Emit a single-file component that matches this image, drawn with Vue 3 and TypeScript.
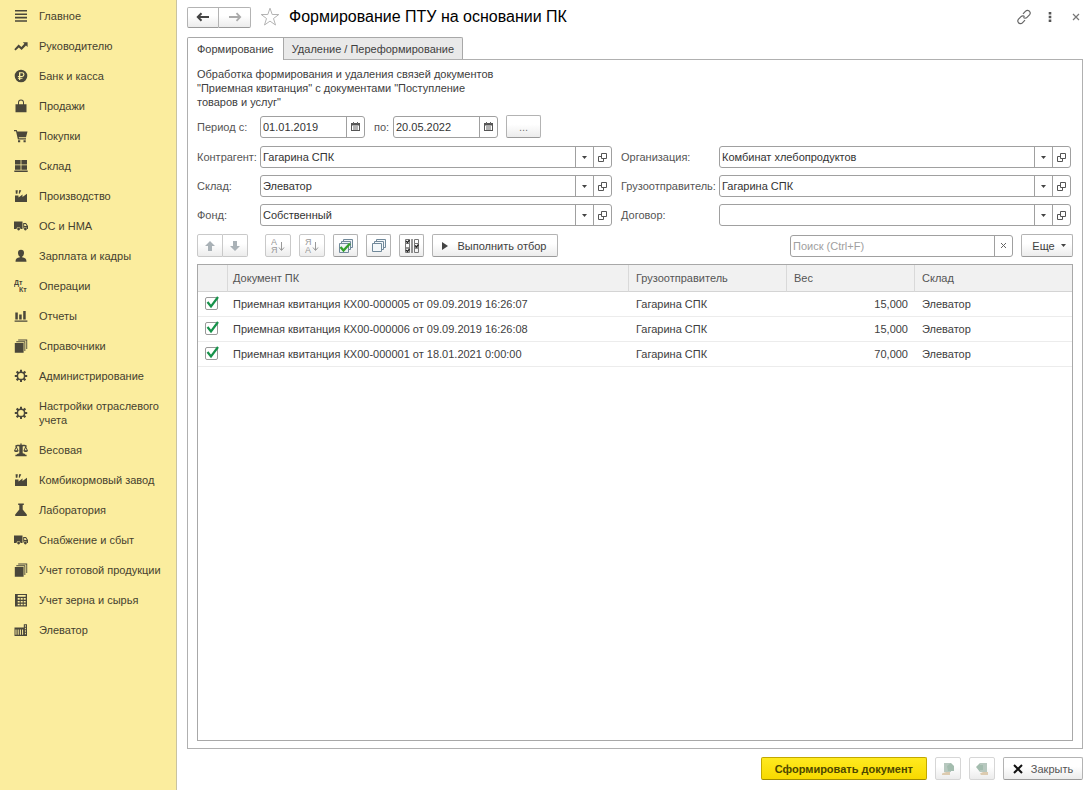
<script setup lang="ts">
import { ref } from 'vue'

interface Section { title: string; icon: string }
interface Receipt { name: string; sender: string; weight: string; store: string; on: boolean }
interface Field { id: string; label: string; value: string }

const paths: Record<string, string> = {
  menu: 'M1 1h12v1.6H1zM1 4.4h12V6H1zM1 7.8h12v1.6H1zM1 11.2h12v1.6H1z',
  trend: 'M0.3 10.2 4.6 5.6 7.4 8 10.4 4.8 8.8 3.2H13.6V8L12 6.4 7.6 10.9 4.8 8.4 1.6 11.4z',
  ruble: 'M7 .7a6.3 6.3 0 1 0 0 12.6A6.3 6.3 0 0 0 7 .7zM5 3.2h3.1a2.4 2.4 0 0 1 0 4.8H6.3v.7h2.2v1H6.3v1.2H5V9.700H3.900v-1H5V8H3.900V6.900H5zM6.300 4.300v2.600h1.700a1.300 1.300 0 0 0 0-2.600z',
  bag: 'M1.500 5.200h2.500V3.400a3 3 0 0 1 6 0v1.800h2.500V13.200h-11zM5 5.200h4V3.400a2 2 0 0 0-4 0z',
  cart: 'M0 1h2.700l.6 1.600H13.500L12 8.300H4.800l.2 1h7v1.100H3.900L2 2.300H0zM4 11.200h2.200v2H4zM9.500 11.200h2.200v2H9.500z',
  store: 'M1 1h5.600v4.500H1zM7.400 1H13v4.500H7.400zM1 6.300h5.600v4.500H1zM7.400 6.300H13v4.500H7.400zM.3 11.500h13.400v1.600H.3z',
  factory: 'M1 13V6.500h3.500V8.500L8.500 5.500v2.500L13 4.800V13zM1.600 1.200h2.200L3.400 4.800H1.800zM5 1.200h2.300L5.600 4.800H4.800z',
  truck: 'M0 2.500h8.500V10H6.500a2 2 0 0 0-4 0H0zM9.200 4H12l2 3v3h-.8a1.900 1.900 0 0 0-3.800 0h-.2zM10.200 5v2h2.500l-1.200-2zM3.200 10a1.400 1.400 0 1 0 2.800 0 1.400 1.400 0 0 0-2.800 0zM10 10a1.400 1.400 0 1 0 2.800 0A1.400 1.400 0 0 0 10 10z',
  person: 'M7 .800a3 3 0 0 1 3 3c0 1.700-.8 3.400-1.900 3.900v.5C11 8.700 12.500 9.700 12.500 12.700h-11c0-3 1.500-4 4.400-4.500v-.5C4.800 7.200 4 5.500 4 3.800a3 3 0 0 1 3-3z',
  chart: 'M1.300 3.500h2.500v7H1.300zM5.200 5.500h2.500v5H5.200zM9.200 2h2.500v8.500H9.200zM.6 11.400h12.800v1.400H.6z',
  books: 'M.8 4h8.800v9.700H.8zM2.300 2.300h9v9.600h-.900V3.200H2.300zM4.200.600h9v9.500h-.9V1.500H4.200z',
  gear: 'M6 .700h2v1.900l1.200.5 1.400-1.300 1.500 1.500-1.300 1.400.5 1.200h1.900v2h-1.900l-.5 1.200 1.300 1.400-1.500 1.500-1.400-1.300-1.200.5v1.900H6v-1.900l-1.200-.5-1.400 1.300-1.500-1.500 1.300-1.400-.5-1.200H.8v-2h1.900l.5-1.200-1.300-1.400 1.500-1.500 1.400 1.300L6 2.600zM7 4.100a2.850 2.850 0 1 0 0 5.700 2.850 2.850 0 0 0 0-5.700z',
  scale: 'M6.300.5h1.400V2c2.500-.8 4 .2 5.300.7v.8h-1l2 4.200c-.4 1.700-4.200 1.700-4.600 0l1.900-4.200c-1-.2-2-.4-2.600-.1v6.800c1.800.2 2.500.8 2.700 1.600h1.200v1.400H1.400v-1.400h1.200c.2-.8 1.900-1.400 2.700-1.600V3.400c-.6-.3-1.600-.1-2.600.1l1.900 4.200c-.4 1.700-4.200 1.700-4.600 0l2-4.200H1v-.8C2.300 2.200 3.800 1.200 6.300 2zM2.300 4.900 1.200 7.300h2.200zM11.700 4.900l-1.100 2.400h2.200z',
  flask: 'M4.200.5h5.600v1.400H8.700v4.600l4.100 5v1.600H1.200v-1.600l4.100-5V1.900H4.200z',
  calc: 'M1 1h12v12.500H1zM3.700 2v1.700h8V2zM3.700 5v1.700h2V5zM6.700 5v1.700h2V5zM9.700 5v1.700h2V5zM3.700 7.900v1.600h2V7.900zM6.700 7.900v1.600h2V7.900zM9.700 7.900v1.600h2V7.900zM3.700 10.700v1.600h2v-1.600zM6.700 10.700v1.600h2v-1.600zM9.700 10.700v1.600h2v-1.600z',
  silo: 'M.5 4.500h9.300V1.200H13V13H.5zM1.500 6.400v5.400h1V6.400zM3.700 6.400v5.400h1V6.400zM5.900 6.400v5.400h1V6.400zM8.100 6.400v5.400h1V6.400zM10.900 2.200v1.500h1V2.200zM10.900 4.700v1.500h1V4.700zM10.900 7.200v1.500h1V7.200zM10.900 9.700v1.500h1V9.700z',
}

const sections: Section[] = [
  { title: 'Главное', icon: 'menu' },
  { title: 'Руководителю', icon: 'trend' },
  { title: 'Банк и касса', icon: 'ruble' },
  { title: 'Продажи', icon: 'bag' },
  { title: 'Покупки', icon: 'cart' },
  { title: 'Склад', icon: 'store' },
  { title: 'Производство', icon: 'factory' },
  { title: 'ОС и НМА', icon: 'truck' },
  { title: 'Зарплата и кадры', icon: 'person' },
  { title: 'Операции', icon: 'entries' },
  { title: 'Отчеты', icon: 'chart' },
  { title: 'Справочники', icon: 'books' },
  { title: 'Администрирование', icon: 'gear' },
  { title: 'Настройки отраслевого учета', icon: 'gear' },
  { title: 'Весовая', icon: 'scale' },
  { title: 'Комбикормовый завод', icon: 'factory' },
  { title: 'Лаборатория', icon: 'flask' },
  { title: 'Снабжение и сбыт', icon: 'truck' },
  { title: 'Учет готовой продукции', icon: 'books' },
  { title: 'Учет зерна и сырья', icon: 'calc' },
  { title: 'Элеватор', icon: 'silo' },
]

const fields = ref<Field[]>([
  { id: 'contractor', label: 'Контрагент:', value: 'Гагарина СПК' },
  { id: 'organization', label: 'Организация:', value: 'Комбинат хлебопродуктов' },
  { id: 'store', label: 'Склад:', value: 'Элеватор' },
  { id: 'sender', label: 'Грузоотправитель:', value: 'Гагарина СПК' },
  { id: 'fund', label: 'Фонд:', value: 'Собственный' },
  { id: 'contract', label: 'Договор:', value: '' },
])

const receipts = ref<Receipt[]>([
  { name: 'Приемная квитанция КХ00-000005 от 09.09.2019 16:26:07', sender: 'Гагарина СПК', weight: '15,000', store: 'Элеватор', on: true },
  { name: 'Приемная квитанция КХ00-000006 от 09.09.2019 16:26:08', sender: 'Гагарина СПК', weight: '15,000', store: 'Элеватор', on: true },
  { name: 'Приемная квитанция КХ00-000001 от 18.01.2021 0:00:00', sender: 'Гагарина СПК', weight: '70,000', store: 'Элеватор', on: true },
])

const dateFrom = ref('01.01.2019')
const dateTo = ref('20.05.2022')
const search = ref('')

function setAll(on: boolean) {
  receipts.value.forEach((r) => { r.on = on })
}
function invert() {
  receipts.value.forEach((r) => { r.on = !r.on })
}
</script>

<template>
  <div class="app">
    <nav class="side">
      <a v-for="s in sections" :key="s.title" href="#" class="section">
        <svg class="section-icon" viewBox="0 0 14 14" aria-hidden="true">
          <g v-if="s.icon === 'entries'" class="entries">
            <text x="0" y="5.500">Дт</text>
            <text x="5" y="13">Кт</text>
          </g>
          <path v-else :d="paths[s.icon]" fill-rule="evenodd" />
        </svg>
        <span>{{ s.title }}</span>
      </a>
    </nav>

    <main class="main">
      <header class="head">
        <div class="pair nav-pair">
          <button type="button" class="btn" aria-label="Назад">
            <svg width="14" height="10" viewBox="0 0 14 10"><path d="M1.500 5H13M5.500 1.200 1.800 5l3.700 3.800" fill="none" stroke="#444" stroke-width="2" /></svg>
          </button>
          <button type="button" class="btn" aria-label="Вперед">
            <svg width="14" height="10" viewBox="0 0 14 10"><path d="M1 5h11.500M8.500 1.200 12.200 5 8.500 8.800" fill="none" stroke="#aaa" stroke-width="1.800" /></svg>
          </button>
        </div>
        <button type="button" class="plain" aria-label="В избранное">
          <svg width="20" height="20" viewBox="0 0 20 20"><path d="M10 1.200l2.200 6.300h6.600l-5.300 4 2 6.500-5.500-3.900L4.500 18l2-6.500-5.300-4h6.600z" fill="#fff" stroke="#b4b4b4" /></svg>
        </button>
        <h1>Формирование ПТУ на основании ПК</h1>
        <div class="head-tools">
          <button type="button" class="plain" aria-label="Ссылка">
            <svg width="16" height="16" viewBox="0 0 16 16" fill="none" stroke="#666" stroke-width="1.200"><path d="M7 4.800 9.600 2.200a2.500 2.500 0 0 1 4 .2 2.600 2.600 0 0 1 .1 3.300L11 8.400a2.500 2.500 0 0 1-3.600 0M9 11.200l-2.600 2.600a2.500 2.500 0 0 1-4-.2 2.600 2.600 0 0 1-.1-3.300L5 7.600a2.500 2.500 0 0 1 3.600 0" /></svg>
          </button>
          <button type="button" class="plain" aria-label="Меню">
            <svg width="4" height="12" viewBox="0 0 4 12" fill="#555"><path d="M.7 1h2.600v2.400H.7zM.7 4.800h2.600v2.400H.7zM.7 8.600h2.600V11H.7z" /></svg>
          </button>
          <button type="button" class="plain" aria-label="Закрыть окно">
            <svg width="8" height="8" viewBox="0 0 8 8"><path d="M1 1l6 6M7 1 1 7" fill="none" stroke="#777" stroke-width="1.200" /></svg>
          </button>
        </div>
      </header>

      <div class="tabs" role="tablist">
        <button type="button" role="tab" aria-selected="true" class="tab active">Формирование</button>
        <button type="button" role="tab" aria-selected="false" class="tab">Удаление / Переформирование</button>
      </div>

      <section class="panel">
        <p class="about">Обработка формирования и удаления связей документов "Приемная квитанция" с документами "Поступление товаров и услуг"</p>

        <div class="period">
          <label for="from" class="period-label">Период с:</label>
          <div class="field date">
            <input id="from" v-model="dateFrom" type="text">
            <button type="button" aria-label="Календарь">
              <svg width="9" height="9" viewBox="0 0 9 9"><path d="M0 1h9v8H0zM1 3.600v4.400h7V3.600z" fill="#555" fill-rule="evenodd" /><path d="M2.500 0v2M6.500 0v2M2 5h5M2 7h5" stroke="#666" /></svg>
            </button>
          </div>
          <label for="to" class="to-label">по:</label>
          <div class="field date">
            <input id="to" v-model="dateTo" type="text">
            <button type="button" aria-label="Календарь">
              <svg width="9" height="9" viewBox="0 0 9 9"><path d="M0 1h9v8H0zM1 3.600v4.400h7V3.600z" fill="#555" fill-rule="evenodd" /><path d="M2.500 0v2M6.500 0v2M2 5h5M2 7h5" stroke="#666" /></svg>
            </button>
          </div>
          <button type="button" class="btn dots">...</button>
        </div>

        <div class="filters">
          <div v-for="f in fields" :key="f.id" class="filter">
            <label :for="f.id">{{ f.label }}</label>
            <div class="field">
              <input :id="f.id" v-model="f.value" type="text">
              <button type="button" aria-label="Выбрать">
                <svg width="5" height="3" viewBox="0 0 5 3"><path d="M0 0h5L2.500 3z" fill="#444" /></svg>
              </button>
              <button type="button" aria-label="Открыть">
                <svg width="9" height="9" viewBox="0 0 9 9" fill="none" stroke="#555"><path d="M3.500.5h5v5h-5zM3.500 3.500h-3v5h5v-3" /></svg>
              </button>
            </div>
          </div>
        </div>

        <div class="toolbar">
          <div class="pair move-pair">
            <button type="button" class="btn pale" aria-label="Вверх">
              <svg width="10" height="10" viewBox="0 0 10 10"><path d="M5 0l5 5H7v5H3V5H0z" fill="#a9b1b6" /></svg>
            </button>
            <button type="button" class="btn pale" aria-label="Вниз">
              <svg width="10" height="10" viewBox="0 0 10 10"><path d="M5 10l5-5H7V0H3v5H0z" fill="#a9b1b6" /></svg>
            </button>
          </div>
          <button type="button" class="btn sort pale" aria-label="По возрастанию">
            <svg width="14" height="16" viewBox="0 0 14 16"><text class="letters" x="0" y="7">А</text><text class="letters" x="0" y="15">Я</text><path d="M10.500 4v8M8 9.500l2.500 3 2.500-3" fill="none" stroke="#999" /></svg>
          </button>
          <button type="button" class="btn sort pale" aria-label="По убыванию">
            <svg width="14" height="16" viewBox="0 0 14 16"><text class="letters" x="0" y="7">Я</text><text class="letters" x="0" y="15">А</text><path d="M10.500 4v8M8 9.500l2.500 3 2.500-3" fill="none" stroke="#999" /></svg>
          </button>
          <button type="button" class="btn tool" aria-label="Отметить все" @click="setAll(true)">
            <svg width="14" height="14" viewBox="0 0 14 14"><g fill="#eef3f6" stroke="#71899a"><path d="M4.500.5h9v8h-9z" /><path d="M2.500 2.500h9v8h-9z" /><path d="M.5 4.500h9v9h-9z" /></g><path d="M1.500 8l3 3.500L11 4.500" fill="none" stroke="#35a02c" stroke-width="2.400" /></svg>
          </button>
          <button type="button" class="btn tool" aria-label="Снять отметки" @click="setAll(false)">
            <svg width="14" height="14" viewBox="0 0 14 14"><g fill="#f4f8fa" stroke="#71899a"><path d="M4.500.5h9v8h-9z" /><path d="M2.500 2.500h9v8h-9z" /><path d="M.5 4.500h9v8h-9z" /></g></svg>
          </button>
          <button type="button" class="btn tool" aria-label="Обратить отметки" @click="invert">
            <svg width="14" height="14" viewBox="0 0 14 14" fill="none" stroke="#777"><path d="M.5.5h4v4h-4zM.5 4.500h4v4.500h-4zM.5 9h4v4.500h-4zM9.500.5h4v4h-4zM9.500 4.500h4V9h-4zM9.500 9h4v4.500h-4z" /><path d="M7 0v14" stroke="#333" /><path d="M1 2l1.500 1.500L4.500 1M1 11l1.500 1.500 2-2.500M10 6.500 11.500 8l2-2.500" stroke="#222" stroke-width="1.300" /></svg>
          </button>
          <button type="button" class="btn run">
            <svg width="6" height="8" viewBox="0 0 6 8"><path d="M0 0l6 4-6 4z" fill="#444" /></svg>
            Выполнить отбор
          </button>
          <div class="field search">
            <input v-model="search" type="text" placeholder="Поиск (Ctrl+F)" aria-label="Поиск">
            <button type="button" aria-label="Очистить" @click="search = ''">
              <svg width="5" height="5" viewBox="0 0 5 5"><path d="M0 0l5 5M5 0 0 5" stroke="#666" /></svg>
            </button>
          </div>
          <button type="button" class="btn more">
            Еще
            <svg width="5" height="3" viewBox="0 0 5 3"><path d="M0 0h5L2.500 3z" fill="#444" /></svg>
          </button>
        </div>

        <div class="grid">
          <table>
            <colgroup><col class="c-mark"><col><col class="c-wide"><col class="c-weight"><col class="c-wide"></colgroup>
            <thead>
              <tr><th></th><th>Документ ПК</th><th>Грузоотправитель</th><th>Вес</th><th>Склад</th></tr>
            </thead>
            <tbody>
              <tr v-for="r in receipts" :key="r.name">
                <td class="mark">
                  <label class="check">
                    <input v-model="r.on" type="checkbox" :aria-label="r.name">
                    <svg v-if="r.on" width="13" height="13" viewBox="0 0 13 13"><path d="M1.500 6l3.500 4.500L12 1" fill="none" stroke="#16924a" stroke-width="2.200" /></svg>
                  </label>
                </td>
                <td>{{ r.name }}</td>
                <td>{{ r.sender }}</td>
                <td class="num">{{ r.weight }}</td>
                <td>{{ r.store }}</td>
              </tr>
            </tbody>
          </table>
        </div>
      </section>

      <footer class="foot">
        <button type="button" class="btn primary">Сформировать документ</button>
        <button type="button" class="btn sort faint" aria-label="Загрузить">
          <svg width="14" height="14" viewBox="0 0 14 14"><path d="M3 1h7v9H3z" fill="#b7c8bf" /><path d="M6 4l4-3 3 3v5H7z" fill="#a3bcae" /><path d="M1 11.500 5 10h4v3H1z" fill="#dccbb0" /></svg>
        </button>
        <button type="button" class="btn sort faint" aria-label="Выгрузить">
          <svg width="14" height="14" viewBox="0 0 14 14"><path d="M5 1h7v9H5z" fill="#b7c8bf" /><path d="M1 5l4-4v2h3v5H5v2z" fill="#a3bcae" /><path d="M5 11.500 8 10h5v3H6z" fill="#dccbb0" /></svg>
        </button>
        <button type="button" class="btn close">
          <svg width="10" height="10" viewBox="0 0 10 10"><path d="M1 1l8 8M9 1 1 9" stroke="#111" stroke-width="2" /></svg>
          Закрыть
        </button>
      </footer>
    </main>
  </div>
</template>

<style>
body { margin: 0; background: #fff; }
</style>

<style scoped>
.app {
  display: flex;
  box-sizing: border-box;
  min-height: 100vh;
  padding-bottom: 6px;
  font: 11px/14px "Liberation Sans", Arial, sans-serif;
  color: #404040;
}
.app * { box-sizing: border-box; }
button, input { font: inherit; color: inherit; margin: 0; }
button { cursor: pointer; }
svg { display: block; flex: none; }

.side {
  flex: none;
  width: 177px;
  padding-top: 1px;
  background: #fbed9e;
  border-right: 1px solid #c9c3a0;
}
.section {
  display: flex;
  align-items: center;
  gap: 11px;
  padding: 8px 12px 8px 14px;
  color: #45412f;
  text-decoration: none;
}
.section-icon { width: 14px; height: 14px; fill: #4a473a; }
.entries { font-size: 7px; font-weight: bold; }

.main {
  flex: 1;
  min-width: 0;
  display: flex;
  flex-direction: column;
  padding: 6px 5px 10px 10px;
}
.head {
  display: flex;
  align-items: center;
  height: 22px;
  gap: 9px;
}
h1 { margin: 0; font-size: 16px; line-height: 20px; font-weight: normal; color: #000; }
.head-tools { display: flex; align-items: center; gap: 6px; margin-left: auto; margin-right: -3px; }
.plain { display: flex; align-items: center; justify-content: center; width: 20px; height: 20px; padding: 0; border: 0; background: none; }

.btn {
  display: flex;
  align-items: center;
  justify-content: center;
  height: 23px;
  padding: 0;
  border: 1px solid #b3b3b3;
  border-bottom-color: #9a9a9a;
  border-radius: 2px;
  background: linear-gradient(#fff 40%, #ececec);
}
.pair { display: flex; }
.pair .btn:first-child { border-radius: 2px 0 0 2px; }
.pair .btn:last-child { border-radius: 0 2px 2px 0; border-left: 0; }
.nav-pair .btn { width: 32px; height: 21px; }
.move-pair { margin-right: 9px; }
.move-pair .btn { width: 26px; }
.move-pair .btn:last-child { width: 25px; }
.tool { width: 25px; }
.sort { width: 26px; }
.app .pale { border-color: #c9c9c9; }
.letters { font-size: 9px; fill: #999; }

.tabs { display: flex; margin-top: 9px; position: relative; }
.tab {
  height: 22px;
  padding: 0 8px;
  border: 1px solid #a8a8a8;
  border-left: 0;
  border-bottom: 0;
  border-radius: 0 2px 0 0;
  background: #e9e9e9;
}
.tab.active { height: 23px; margin-bottom: -1px; padding: 0 9px; border-left: 1px solid #a8a8a8; border-radius: 2px 0 0 0; background: #fff; }

.panel {
  flex: 1;
  display: flex;
  flex-direction: column;
  padding: 7px 9px;
  border: 1px solid #b0b0b0;
}
.about { margin: 0; max-width: 310px; }

.field {
  display: flex;
  min-width: 0;
  height: 22px;
  border: 1px solid #a0a0a0;
  border-radius: 3px;
  background: #fff;
}
.field input {
  flex: 1;
  min-width: 0;
  width: 100%;
  padding: 0 2px;
  border: 0;
  outline: 0;
  background: none;
  color: #333;
}
.field input::placeholder { color: #a0a0a0; opacity: 1; }
.field button {
  flex: none;
  display: flex;
  align-items: center;
  justify-content: center;
  width: 18px;
  padding: 0;
  border: 0;
  border-left: 1px solid #a0a0a0;
  background: none;
}

.period { display: flex; align-items: center; margin-top: 6px; color: #555; }
.period-label { width: 63px; }
.date { width: 105px; }
.to-label { width: 28px; padding-left: 9px; }
.dots { width: 35px; margin-left: 8px; color: #777; }

.filters {
  display: grid;
  grid-template-columns: 415fr 450fr;
  gap: 7px 9px;
  margin-top: 8px;
  padding-right: 2px;
}
.filter { display: flex; align-items: center; min-width: 0; color: #555; }
.filter label { flex: none; width: 63px; white-space: nowrap; }
.filter:nth-child(even) label { width: 98px; }
.filter .field { flex: 1; }

.toolbar { display: flex; align-items: center; gap: 8px; margin-top: 8px; }
.run { width: 126px; gap: 10px; padding-right: 2px; }
.search { width: 223px; margin-left: auto; }
.more { width: 52px; gap: 6px; padding-left: 4px; }

.grid { flex: 1; margin-top: 7px; border: 1px solid #a8a8a8; }
table { width: 100%; table-layout: fixed; border-collapse: separate; border-spacing: 0; }
.c-mark { width: 29px; }
.c-wide { width: 158px; }
.c-weight { width: 128px; }
th {
  height: 27px;
  padding: 0 0 0 7px;
  text-align: left;
  font-weight: normal;
  color: #555;
  background: #f1f1f1;
  border-bottom: 1px solid #d4d4d4;
  border-left: 1px solid #d9d9d9;
}
th:first-child { border-left: 0; }
th:nth-child(2) { padding-left: 5px; }
td {
  height: 25px;
  padding: 0 0 0 8px;
  border-bottom: 1px solid #ececec;
  white-space: nowrap;
}
td:nth-child(2) { padding-left: 6px; }
td.mark { padding: 0 0 1px 7px; }
td.num { padding-right: 6px; text-align: right; }
.check { display: block; position: relative; width: 13px; height: 13px; }
.check input {
  display: block;
  appearance: none;
  width: 13px;
  height: 13px;
  margin: 0;
  border: 1px solid #999;
  border-radius: 2px;
  background: #fff;
}
.check svg { position: absolute; left: 1px; top: -1px; }

.foot { display: flex; justify-content: flex-end; gap: 8px; margin-top: 8px; }
.primary {
  padding: 0 13px;
  font-weight: bold;
  color: #4d4700;
  border-color: #c2a800;
  border-bottom-color: #a08c00;
  background: linear-gradient(#ffea1f, #f7d900);
}
.faint { border-color: #d6d6d6; }
.close { width: 80px; gap: 8px; color: #555; }
</style>
